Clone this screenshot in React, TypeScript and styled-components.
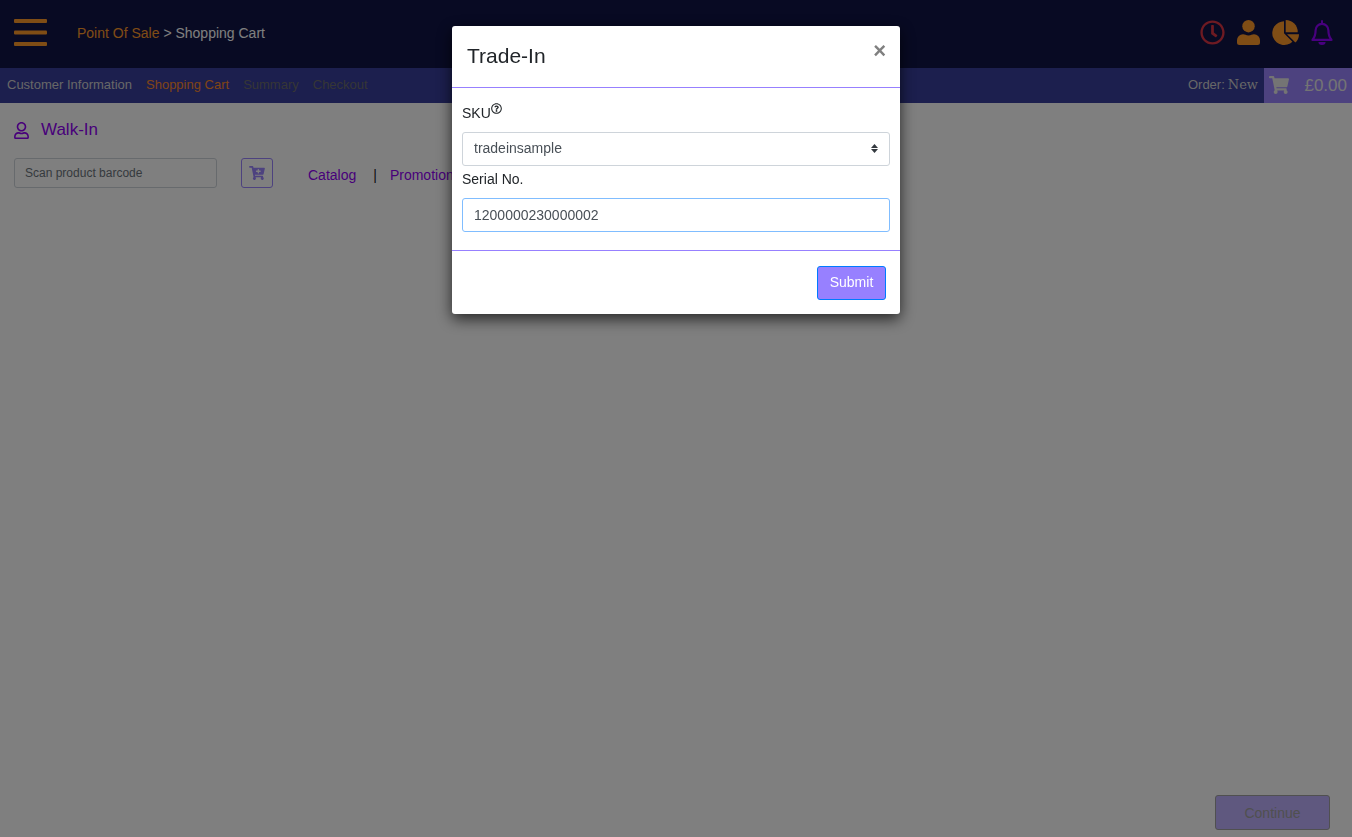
import React, { useState } from 'react';
import styled, { createGlobalStyle } from 'styled-components';
import {
  FaRegClock,
  FaShoppingCart,
  FaCartPlus,
  FaRegUser,
  FaRegQuestionCircle,
} from 'react-icons/fa';

const GlobalStyle = createGlobalStyle`
  *, *::before, *::after { box-sizing: border-box; }
  body {
    margin: 0;
    background: #fff;
    color: #212529;
    font: 14px/20px "Liberation Sans", Arial, sans-serif;
  }
  button, input, select { font: inherit; margin: 0; }
  button { cursor: pointer; }
  a { text-decoration: none; }
`;

const Page = styled.div`
  display: flex;
  flex-direction: column;
  min-height: 100vh;
`;

const TopBar = styled.header`
  display: flex;
  align-items: center;
  height: 68px;
  padding: 0 19px 3px 14px;
  background: #101446;
`;

const IconButton = styled.button<{ $color: string; $width: number }>`
  display: flex;
  padding: 0;
  border: 0;
  background: none;
  color: ${(p) => p.$color};
  svg { width: ${(p) => p.$width}px; height: 25px; }
`;

const MenuButton = styled(IconButton)`
  margin-right: 30px;
  svg { height: 27px; }
`;

const Breadcrumb = styled.nav`
  flex: 1;
  color: #fff;
  a { color: #ff9a2b; }
`;

const TopIcons = styled.div`
  display: flex;
  align-items: center;
  gap: 12px;
`;

const StepBar = styled.div`
  display: flex;
  height: 35px;
  background: #383e9c;
  font-size: 13px;
  line-height: 33px;
`;

const Steps = styled.nav`
  display: flex;
  flex: 1;
  gap: 14px;
  padding-left: 7px;
`;

const Step = styled.a<{ $color: string }>`
  color: ${(p) => p.$color};
`;

const OrderLabel = styled.div`
  display: flex;
  gap: 3px;
  padding-right: 6px;
  color: #cfcfcf;
`;

const OrderState = styled.span`
  font-family: "DejaVu Serif", serif;
`;

const CartTotal = styled.button`
  display: flex;
  align-items: center;
  justify-content: space-between;
  width: 88px;
  padding: 0 5px 1px;
  border: 0;
  background: #9a84ff;
  color: #e8e8e8;
  font-size: 17px;
  svg { width: 20px; height: 18px; }
`;

const Content = styled.main`
  flex: 1;
  padding: 17px 14px;
`;

const Customer = styled.a`
  display: flex;
  align-items: center;
  gap: 12px;
  width: fit-content;
  color: #9000f5;
  font-size: 17px;
  svg { width: 15px; height: 17px; }
`;

const Toolbar = styled.div`
  display: flex;
  align-items: center;
  margin-top: 18px;
`;

const BarcodeInput = styled.input`
  width: 203px;
  height: 30px;
  margin-right: 24px;
  padding: 0 10px;
  border: 1px solid #ced4da;
  border-radius: 3px;
  background: transparent;
  font-size: 12px;
  &::placeholder { color: #6c757d; opacity: 1; }
`;

const AddButton = styled.button`
  display: flex;
  align-items: center;
  justify-content: center;
  width: 32px;
  height: 30px;
  padding: 0 0 1px;
  border: 1px solid #9a84ff;
  border-radius: 3px;
  background: none;
  color: #9a84ff;
  svg { width: 16px; height: 14px; }
`;

const Links = styled.nav`
  display: flex;
  margin-left: 35px;
  padding-top: 4px;
  a { color: #9000f5; }
  span { padding: 0 13px 0 17px; }
`;

const PageFooter = styled.footer`
  display: flex;
  justify-content: flex-end;
  padding: 0 22px 7px;
`;

const ContinueButton = styled.button`
  width: 115px;
  height: 35px;
  border: 1px solid #a0a0a0;
  border-radius: 3px;
  background: #beb0ff;
  color: #a0a0a0;
`;

const Backdrop = styled.div`
  position: fixed;
  inset: 0;
  padding: 26px 10px;
  background: rgba(0, 0, 0, 0.5);
`;

const Dialog = styled.form`
  width: 100%;
  max-width: 448px;
  margin: 0 auto;
  border-radius: 3px;
  background: #fff;
  box-shadow: 0 5px 15px rgba(0, 0, 0, 0.7);
`;

const DialogHeader = styled.div`
  display: flex;
  align-items: flex-start;
  justify-content: space-between;
  padding: 15px 14px 16px 15px;
  border-bottom: 1px solid #9780ff;
`;

const DialogTitle = styled.h1`
  margin: 0;
  font-size: 21px;
  font-weight: 400;
  line-height: 30px;
`;

const CloseButton = styled.button`
  padding: 0;
  border: 0;
  background: none;
  color: #808080;
  font-size: 22px;
  font-weight: 700;
  line-height: 20px;
`;

const DialogBody = styled.div`
  padding: 15px 10px 18px;
`;

const FieldLabel = styled.label`
  display: flex;
  align-items: center;
  height: 20px;
  svg { width: 11px; height: 11px; margin-bottom: 10px; }
`;

const Field = styled.div`
  position: relative;
  margin-top: 9px;
  & + ${FieldLabel} { margin-top: 3px; }
  > svg {
    position: absolute;
    top: 12px;
    right: 12px;
    pointer-events: none;
  }
`;

const SelectBox = styled.select`
  display: block;
  width: 100%;
  height: 34px;
  padding: 0 30px 2px 11px;
  appearance: none;
  border: 1px solid #ced4da;
  border-radius: 3px;
  background: #fff;
  color: #495057;
`;

const TextBox = styled.input`
  display: block;
  width: 100%;
  height: 34px;
  padding: 0 11px;
  border: 1px solid #80bdff;
  border-radius: 3px;
  outline: 0;
  color: #495057;
`;

const DialogFooter = styled.div`
  display: flex;
  justify-content: flex-end;
  padding: 15px 14px 14px;
  border-top: 1px solid #9780ff;
`;

const SubmitButton = styled.button`
  width: 69px;
  height: 34px;
  padding: 0 0 2px;
  border: 1px solid #007bff;
  border-radius: 3px;
  background: #9780ff;
  color: #fff;
`;

const MenuIcon = () => (
  <svg viewBox="0 0 33 27" fill="currentColor">
    <rect y="0" width="33" height="4" rx="1" />
    <rect y="11.5" width="33" height="4" rx="1" />
    <rect y="23" width="33" height="4" rx="1" />
  </svg>
);

const UserIcon = () => (
  <svg viewBox="0 0 23 25" fill="currentColor">
    <circle cx="11.5" cy="6.2" r="6.2" />
    <path d="M6 14.2c2 0 3 1.2 5.5 1.2s3.500-1.200 5.500-1.200a6 6 0 0 1 6 6v2.300a2.500 2.500 0 0 1-2.500 2.500h-18A2.500 2.500 0 0 1 0 22.500v-2.300a6 6 0 0 1 6-6z" />
  </svg>
);

const PieIcon = () => (
  <svg viewBox="0 0 27 25" fill="currentColor">
    <path d="M12 1.200V13.200l8.400 8.500A11.900 11.900 0 1 1 12 1.200z" />
    <path d="M13.700 0a12 12 0 0 1 12 12.200h-12z" />
    <path d="M15 14.200h12a12 12 0 0 1-3.600 8.400z" />
  </svg>
);

const BellIcon = () => (
  <svg viewBox="0 0 22 25" fill="none">
    <path
      d="M1.500 19.900h19c-1.600-1.900-3.100-3.600-3.100-9.600a6.400 6.400 0 0 0-12.800 0c0 6-1.500 7.700-3.100 9.600z"
      stroke="currentColor"
      strokeWidth="2.200"
      strokeLinejoin="round"
    />
    <path d="M10 3.500V1a1 1 0 0 1 2 0v2.500zM7.400 22h7.200a3.600 3 0 0 1-7.200 0z" fill="currentColor" />
  </svg>
);

const SortIcon = () => (
  <svg width="7" height="9" viewBox="0 0 7 9" fill="#343a40">
    <path d="M3.500 0L0 4h7zM3.500 9L0 5h7z" />
  </svg>
);

export default function App() {
  const [serial, setSerial] = useState('1200000230000002');
  return (
    <>
      <GlobalStyle />
      <Page>
        <TopBar>
          <MenuButton $color="#ff9a2b" $width={33} aria-label="Menu"><MenuIcon /></MenuButton>
          <Breadcrumb>
            <a href="#pos">Point Of Sale</a> &gt; Shopping Cart
          </Breadcrumb>
          <TopIcons>
            <IconButton $color="#dc3545" $width={25} aria-label="Clock"><FaRegClock /></IconButton>
            <IconButton $color="#ff9a2b" $width={23} aria-label="Account"><UserIcon /></IconButton>
            <IconButton $color="#ff9a2b" $width={27} aria-label="Reports"><PieIcon /></IconButton>
            <IconButton $color="#9000ff" $width={22} aria-label="Notifications"><BellIcon /></IconButton>
          </TopIcons>
        </TopBar>
        <StepBar>
          <Steps>
            <Step href="#customer" $color="#cfcfcf">Customer Information</Step>
            <Step href="#cart" $color="#ff8a2b">Shopping Cart</Step>
            <Step href="#summary" $color="#6c6c6c">Summary</Step>
            <Step href="#checkout" $color="#6c6c6c">Checkout</Step>
          </Steps>
          <OrderLabel>
            Order: <OrderState>New</OrderState>
          </OrderLabel>
          <CartTotal>
            <FaShoppingCart />
            £0.00
          </CartTotal>
        </StepBar>
        <Content>
          <Customer href="#walk-in">
            <FaRegUser />
            Walk-In
          </Customer>
          <Toolbar>
            <BarcodeInput placeholder="Scan product barcode" aria-label="Scan product barcode" />
            <AddButton aria-label="Add to cart"><FaCartPlus /></AddButton>
            <Links>
              <a href="#catalog">Catalog</a>
              <span>|</span>
              <a href="#promotions">Promotions</a>
            </Links>
          </Toolbar>
        </Content>
        <PageFooter>
          <ContinueButton disabled>Continue</ContinueButton>
        </PageFooter>
      </Page>
      <Backdrop>
        <Dialog role="dialog" aria-labelledby="dialog-title" onSubmit={(e) => e.preventDefault()}>
          <DialogHeader>
            <DialogTitle id="dialog-title">Trade-In</DialogTitle>
            <CloseButton type="button" aria-label="Close">×</CloseButton>
          </DialogHeader>
          <DialogBody>
            <FieldLabel htmlFor="sku">
              SKU
              <FaRegQuestionCircle />
            </FieldLabel>
            <Field>
              <SelectBox id="sku">
                <option>tradeinsample</option>
              </SelectBox>
              <SortIcon />
            </Field>
            <FieldLabel htmlFor="serial">Serial No.</FieldLabel>
            <Field>
              <TextBox id="serial" value={serial} onChange={(e) => setSerial(e.target.value)} />
            </Field>
          </DialogBody>
          <DialogFooter>
            <SubmitButton type="submit">Submit</SubmitButton>
          </DialogFooter>
        </Dialog>
      </Backdrop>
    </>
  );
}
